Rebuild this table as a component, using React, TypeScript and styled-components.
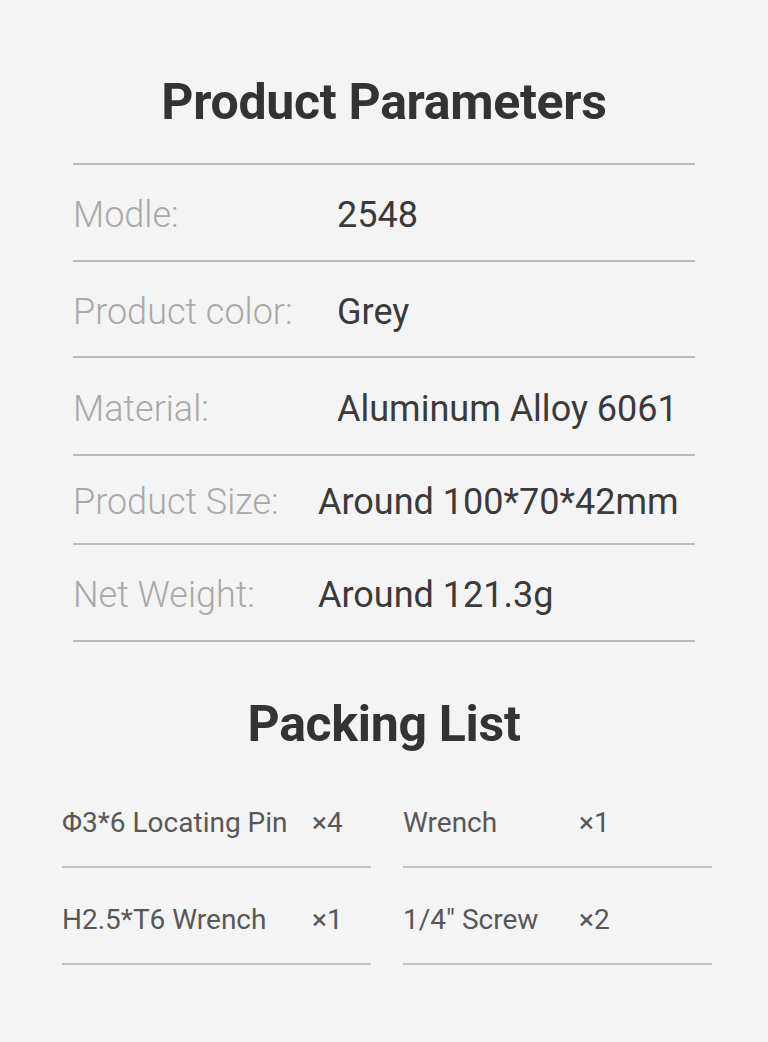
import React from "react";
import styled, { createGlobalStyle } from "styled-components";

const GlobalStyle = createGlobalStyle`
    html, body {
        margin: 0;
        padding: 0;
        background: #f4f4f4;
    }
    body {
        font-family: Roboto, "Liberation Sans", sans-serif;
    }
`;

const Page = styled.div`
    width: 768px;
    min-height: 1042px;
    background: #f4f4f4;
    padding-top: 77px;
    box-sizing: border-box;
`;

const Title = styled.h1<{ $gap?: number }>`
    margin: ${(p) => p.$gap ?? 0}px 0 0 0;
    text-align: center;
    font-family: Roboto, "Liberation Sans", sans-serif;
    font-weight: 700;
    font-size: 50px;
    line-height: 1;
    color: #333333;
    letter-spacing: -0.3px;
`;

const ParamTable = styled.div`
    margin: 36px 73px 0 73px;
    border-top: 2px solid #b9b9b9;
`;

const ParamRow = styled.div<{ $height: number }>`
    display: flex;
    align-items: center;
    height: ${(p) => p.$height}px;
    box-sizing: border-box;
    padding-top: 5px;
    border-bottom: 2px solid #b9b9b9;
`;

const Label = styled.span<{ $width: number }>`
    width: ${(p) => p.$width}px;
    flex-shrink: 0;
    font-size: 36px;
    line-height: 1;
    font-weight: 300;
    color: #a9a9a9;
    white-space: nowrap;
`;

const Value = styled.span`
    font-size: 36px;
    line-height: 1;
    font-weight: 400;
    color: #3a3a3a;
    white-space: nowrap;
`;

const PackGrid = styled.div`
    display: grid;
    grid-template-columns: 309px 309px;
    column-gap: 32px;
    margin: 22px 0 0 62px;
`;

const PackItem = styled.div`
    display: flex;
    align-items: center;
    height: 97px;
    box-sizing: border-box;
    padding-top: 9px;
    border-bottom: 2px solid #c2c2c2;
`;

const PackName = styled.span<{ $width: number }>`
    width: ${(p) => p.$width}px;
    flex-shrink: 0;
    font-size: 28px;
    line-height: 1;
    color: #585858;
    white-space: nowrap;
`;

const PackQty = styled.span`
    font-size: 28px;
    line-height: 1;
    color: #585858;
`;

const params = [
    { label: "Modle:", value: "2548", height: 97, labelWidth: 264 },
    { label: "Product color:", value: "Grey", height: 96, labelWidth: 264 },
    { label: "Material:", value: "Aluminum Alloy 6061", height: 98, labelWidth: 264 },
    { label: "Product Size:", value: "Around 100*70*42mm", height: 89, labelWidth: 245 },
    { label: "Net Weight:", value: "Around 121.3g", height: 97, labelWidth: 245 },
];

const packing = [
    { name: "Φ3*6 Locating Pin", qty: "×4", nameWidth: 250 },
    { name: "Wrench", qty: "×1", nameWidth: 176 },
    { name: "H2.5*T6 Wrench", qty: "×1", nameWidth: 250 },
    { name: "1/4\" Screw", qty: "×2", nameWidth: 176 },
];

const App = () => {
    return (
        <Page>
            <GlobalStyle />
            <Title>Product Parameters</Title>

            <ParamTable>
                {params.map((row) => (
                    <ParamRow key={row.label} $height={row.height}>
                        <Label $width={row.labelWidth}>{row.label}</Label>
                        <Value>{row.value}</Value>
                    </ParamRow>
                ))}
            </ParamTable>

            <Title $gap={57}>Packing List</Title>

            <PackGrid>
                {packing.map((item) => (
                    <PackItem key={item.name}>
                        <PackName $width={item.nameWidth}>{item.name}</PackName>
                        <PackQty>{item.qty}</PackQty>
                    </PackItem>
                ))}
            </PackGrid>
        </Page>
    );
};

export default App;
